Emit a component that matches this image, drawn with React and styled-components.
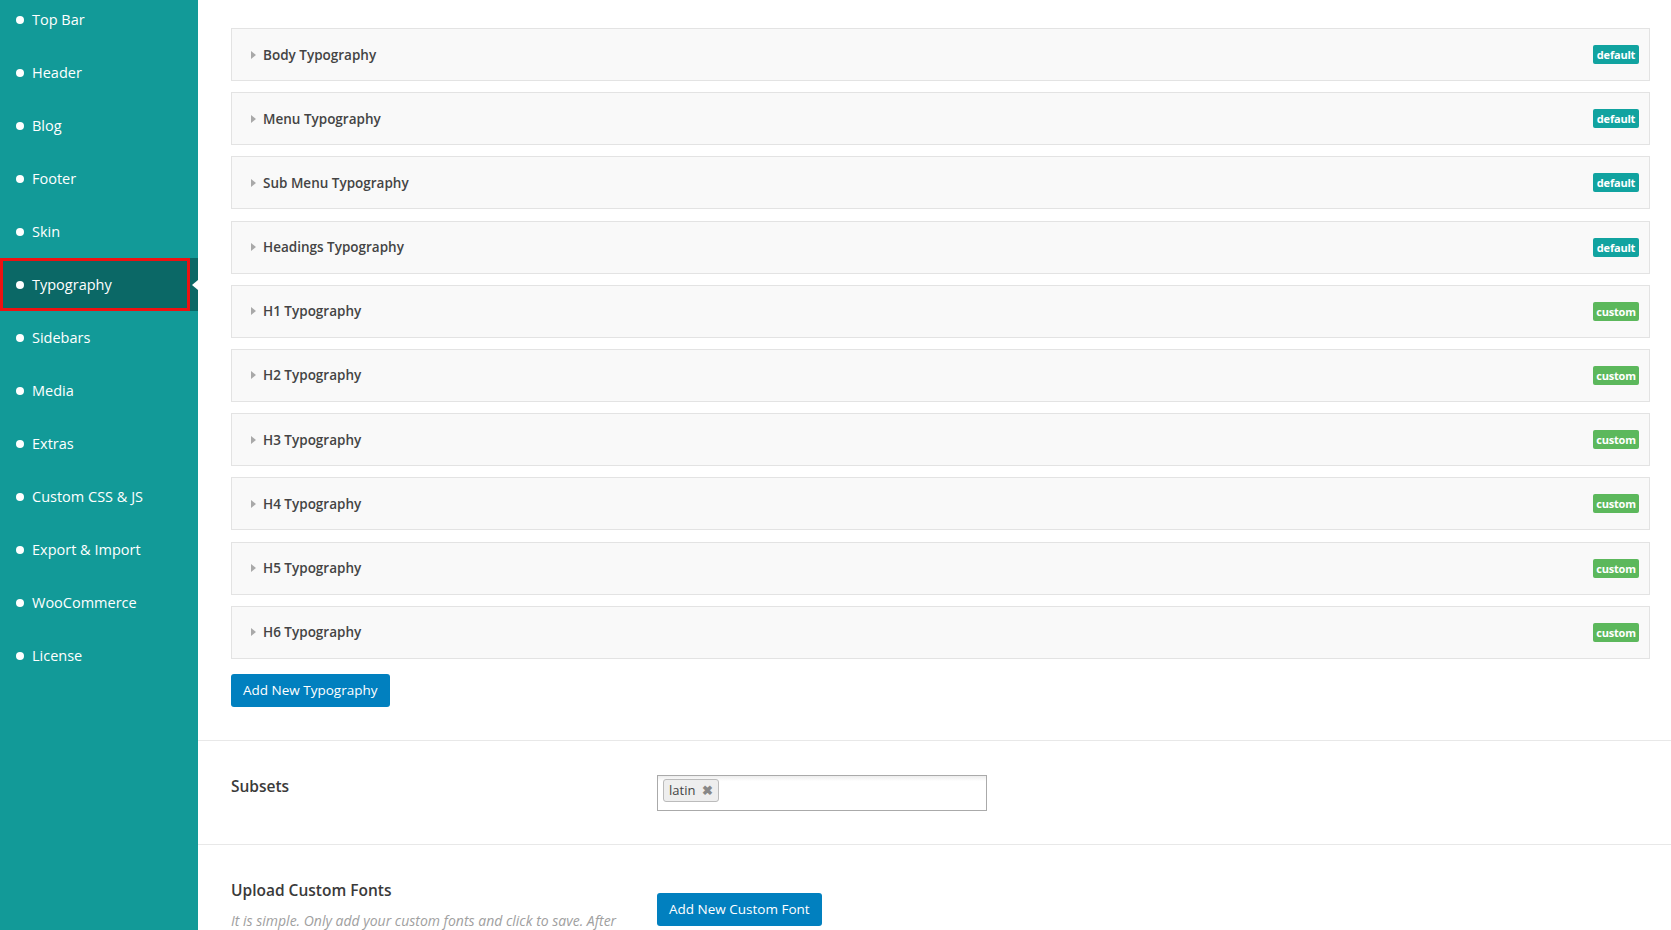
import styled, { createGlobalStyle } from "styled-components";

const GlobalStyle = createGlobalStyle`
  html, body {
    margin: 0;
    padding: 0;
    background: #fff;
    font-family: "Open Sans", "Noto Sans", Arial, sans-serif;
  }
`;

const menu = [
  "Top Bar",
  "Header",
  "Blog",
  "Footer",
  "Skin",
  "Typography",
  "Sidebars",
  "Media",
  "Extras",
  "Custom CSS & JS",
  "Export & Import",
  "WooCommerce",
  "License",
];

const typos = [
  { name: "Body Typography", kind: "default" },
  { name: "Menu Typography", kind: "default" },
  { name: "Sub Menu Typography", kind: "default" },
  { name: "Headings Typography", kind: "default" },
  { name: "H1 Typography", kind: "custom" },
  { name: "H2 Typography", kind: "custom" },
  { name: "H3 Typography", kind: "custom" },
  { name: "H4 Typography", kind: "custom" },
  { name: "H5 Typography", kind: "custom" },
  { name: "H6 Typography", kind: "custom" },
];

const App = () => {
  return (
    <>
      <GlobalStyle />
      <Page>
        <Sidebar>
          <Nav>
            {menu.map((item) => (
              <NavItem key={item} $active={item === "Typography"}>
                <Dot />
                {item}
              </NavItem>
            ))}
          </Nav>
        </Sidebar>
        <Main>
          <TypoList>
            {typos.map((t) => (
              <Card key={t.name}>
                <CardTitle>
                  <Arrow />
                  {t.name}
                </CardTitle>
                <Badge $kind={t.kind}>{t.kind}</Badge>
              </Card>
            ))}
            <div>
              <Button>Add New Typography</Button>
            </div>
          </TypoList>
          <Section>
            <Label>Subsets</Label>
            <Field>
              <TagInput>
                <Tag>
                  latin <TagClose>✖</TagClose>
                </Tag>
              </TagInput>
            </Field>
          </Section>
          <Section $last>
            <div>
              <Label>Upload Custom Fonts</Label>
              <Desc>
                It is simple. Only add your custom fonts and click to save. After
              </Desc>
            </div>
            <Field $pushDown>
              <Button>Add New Custom Font</Button>
            </Field>
          </Section>
        </Main>
      </Page>
    </>
  );
};

export default App;

const Page = styled.div`
  display: flex;
  min-height: 100vh;
  overflow: hidden;
  height: 930px;
`;

const Sidebar = styled.aside`
  width: 198px;
  flex-shrink: 0;
  background: #129a98;
`;

const Nav = styled.ul`
  list-style: none;
  margin: -7px 0 0 0;
  padding: 0;
`;

const NavItem = styled.li`
  position: relative;
  display: flex;
  align-items: center;
  height: 53px;
  padding-left: 16px;
  color: #fff;
  font-size: 14.5px;
  background: ${(p) => (p.$active ? "#0b6866" : "transparent")};

  ${(p) =>
    p.$active &&
    `
    &::before {
      content: "";
      position: absolute;
      left: 0;
      top: 0;
      bottom: 0;
      right: 8px;
      border: 3px solid #ee1111;
    }
    &::after {
      content: "";
      position: absolute;
      right: 0;
      top: 50%;
      margin-top: -5px;
      border-style: solid;
      border-width: 5px 6px 5px 0;
      border-color: transparent #fff transparent transparent;
    }
  `}
`;

const Dot = styled.span`
  width: 8px;
  height: 8px;
  border-radius: 50%;
  background: #fff;
  margin-right: 8px;
`;

const Main = styled.main`
  flex: 1;
  min-width: 0;
`;

const TypoList = styled.div`
  display: flex;
  flex-direction: column;
  gap: 11.2px;
  padding: 28px 21px 33px 33px;
  border-bottom: 1px solid #e8e8e8;

  > div:last-child {
    margin-top: 4px;
  }
`;

const Card = styled.div`
  height: 53px;
  box-sizing: border-box;
  display: flex;
  align-items: center;
  justify-content: space-between;
  padding: 0 10px 0 19px;
  background: #f9f9f9;
  border: 1px solid #e3e3e3;
`;

const CardTitle = styled.div`
  display: flex;
  align-items: center;
  font-size: 13.5px;
  font-weight: 600;
  color: #444;
`;

const Arrow = styled.span`
  width: 0;
  height: 0;
  border-style: solid;
  border-width: 4px 0 4px 5px;
  border-color: transparent transparent transparent #a9a9a9;
  margin-right: 7px;
`;

const Badge = styled.span`
  display: inline-flex;
  align-items: center;
  justify-content: center;
  width: 46px;
  height: 19px;
  border-radius: 2px;
  background: ${(p) => (p.$kind === "default" ? "#11a3a0" : "#5cb85c")};
  color: #fff;
  font-size: 11px;
  font-weight: 700;
  letter-spacing: -0.2px;
`;

const Button = styled.button`
  display: inline-flex;
  align-items: center;
  height: 33px;
  padding: 0 12px;
  border: none;
  border-radius: 3px;
  background: #0180bf;
  color: #fff;
  font-family: "Open Sans", "Noto Sans", Arial, sans-serif;
  font-size: 13.5px;
  cursor: pointer;
`;

const Section = styled.div`
  display: grid;
  grid-template-columns: 426px 1fr;
  padding: ${(p) => (p.$last ? "34px 21px 20px 33px" : "34px 21px 33px 33px")};
  border-bottom: ${(p) => (p.$last ? "none" : "1px solid #e8e8e8")};
`;

const Label = styled.div`
  font-size: 15.5px;
  font-weight: 600;
  color: #3a3a3a;
`;

const Desc = styled.div`
  margin-top: 10px;
  font-size: 14px;
  font-style: italic;
  color: #a0a0a0;
  white-space: nowrap;
`;

const Field = styled.div`
  padding-top: ${(p) => (p.$pushDown ? "14px" : "0")};
`;

const TagInput = styled.div`
  width: 330px;
  height: 36px;
  box-sizing: border-box;
  border: 1px solid #aaa;
  padding: 3px 5px;
  display: flex;
  align-items: flex-start;
  background: linear-gradient(#eee 1%, #fff 15%);
`;

const Tag = styled.span`
  display: inline-flex;
  align-items: center;
  height: 23px;
  box-sizing: border-box;
  padding: 0 5px;
  border: 1px solid #bbb;
  border-radius: 3px;
  background: #eee;
  font-size: 13px;
  color: #444;
`;

const TagClose = styled.span`
  margin-left: 7px;
  font-size: 13px;
  font-weight: 700;
  color: #888;
`;
